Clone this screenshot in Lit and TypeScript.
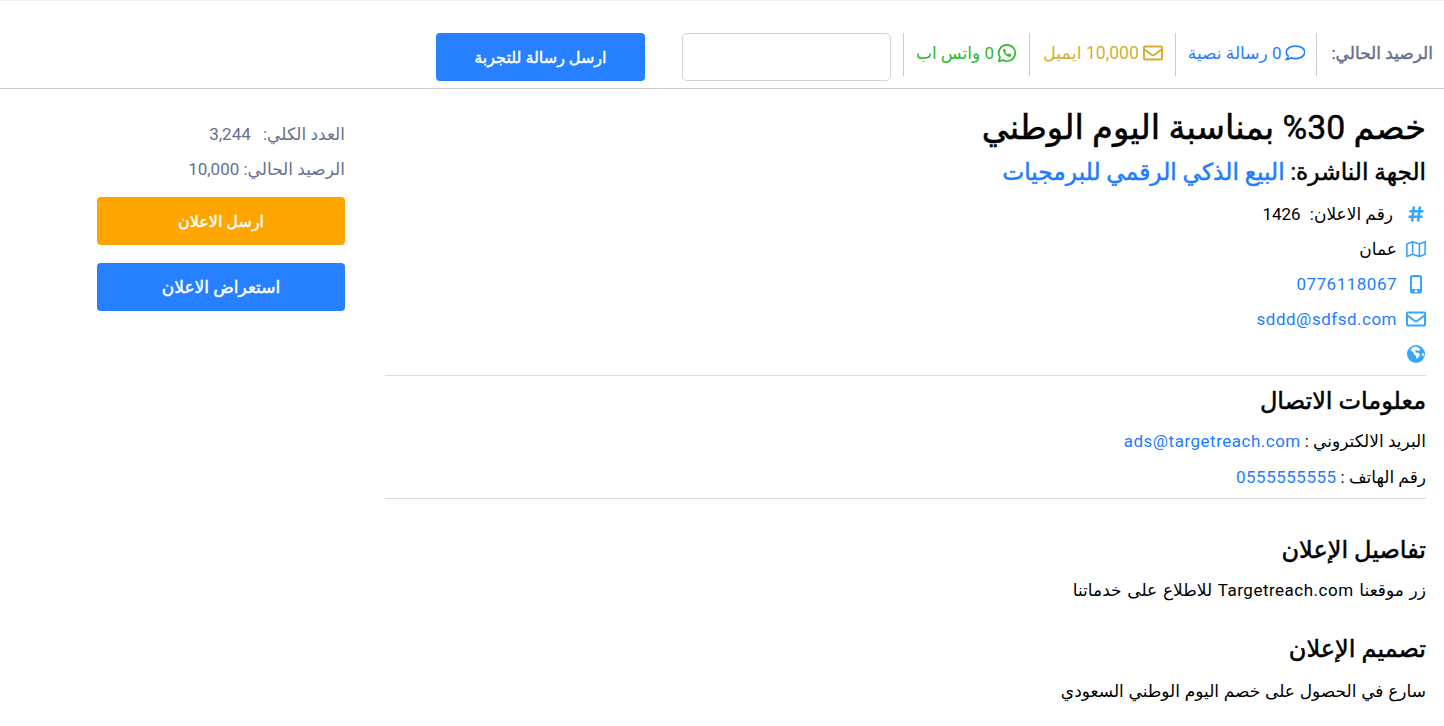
import { LitElement, html, css, svg } from "lit";
import { customElement } from "lit/decorators.js";

const chat = svg`<path d="M10.500 3C5.300 3 1.200 5.700 1.200 9.200c0 1.500.8 3 2.100 4-.2 1.200-.9 2.300-1.900 3.200 1.700-.1 3.300-.7 4.500-1.600 1.400.5 3 .8 4.600.8 5.200 0 9.300-2.800 9.300-6.400S15.700 3 10.500 3z" fill="none" stroke="currentColor" stroke-width="1.600"/>`;
const mail = svg`<rect x="1" y="3.500" width="18" height="13" rx="1" fill="none" stroke="currentColor" stroke-width="2"/><path d="M1.500 6.500l7 5.200c.9.700 2.100.7 3 0l7-5.200" fill="none" stroke="currentColor" stroke-width="2"/>`;
const wa = svg`<path d="M10 1.800a8.200 8.200 0 00-7 12.500L1.900 18.200l4-1.100A8.200 8.200 0 1010 1.800z" fill="none" stroke="currentColor" stroke-width="1.700" stroke-linejoin="round"/><path d="M7 5.800c-1 .8-1.200 2-.4 3.500.9 1.900 2.400 3.300 4.300 4.100 1.500.6 2.800.2 3.300-1 .2-.5.100-.8-.2-1l-1.600-.8c-.3-.1-.5 0-.7.200l-.6.800c-1.300-.5-2.300-1.400-3-2.700l.5-.6c.2-.3.200-.5.100-.7l-.7-1.600c-.2-.4-.5-.4-1-.2z" fill="currentColor"/>`;
const hash = svg`<path d="M8 2.500L6 17.500M14 2.500L12 17.500M3.500 7.300h14M2.500 12.700h14" fill="none" stroke="currentColor" stroke-width="2.600"/>`;
const map = svg`<path d="M.9 5l5.700-2.300 6.800 2.300 5.700-2.300v12.500l-5.700 2.300-6.800-2.300-5.700 2.300zM6.600 2.700v12.500M13.400 5v12.500" fill="none" stroke="currentColor" stroke-width="1.600" stroke-linejoin="round"/>`;
const phone = svg`<path fill-rule="evenodd" d="M6 1h8c1.100 0 2 .9 2 2v14.500c0 1.100-.9 2-2 2H6c-1.100 0-2-.9-2-2V3c0-1.100.9-2 2-2zm0 2.200V15h8V3.200zM10 15.800a1.400 1.400 0 100 2.800 1.400 1.400 0 000-2.800z" fill="currentColor"/>`;
const globe = svg`<circle cx="10" cy="10" r="9" fill="currentColor"/><path d="M10 2.500l3 1.500 1.500 2-2.500 1-1-1-2 .5 1 2 3 .5 1 2-2 3-1.500 1-.5-3-2-1.500-.5-2-3-2.500 2-2.500zM16 9l2 .5-.5 3-1.500-1z" fill="#fff"/>`;

const icon = (p: unknown) => html`<svg class="ic" viewBox="0 0 20 20">${p}</svg>`;
const L = (s: string) => html`<span class="lat">${s}</span>`;

@customElement("app-root")
export class AppRoot extends LitElement {
  static styles = css`
    :host { display: block; height: 726px; overflow: hidden; background: #fff; color: #000;
      font-family: "Roboto", "DejaVu Sans", sans-serif; font-size: 17px; direction: rtl; }
    .ic { width: 20px; height: 20px; flex: none; display: block; }
    a { color: #1f7cff; }
    .lat { letter-spacing: .5px; }
    .semi { -webkit-text-stroke: .45px currentColor; }
    .top { height: 89px; box-sizing: border-box; border-top: 1px solid #f0f0f0; border-bottom: 1px solid #ccc;
      display: flex; align-items: flex-start; padding: 32px 11px 0 0; }
    .stat { height: 43px; display: flex; align-items: center; gap: 4px; padding: 0 12px 4px 12px; box-sizing: border-box; border-left: 1px solid #ccc; white-space: nowrap; }
    .stat.lbl { padding: 0 0 4px 14px; color: #67708f; }
    .blue { color: #1f7cff; padding-right: 11px; }
    .gold { color: #d4af37; padding-left: 13px; }
    .gold span { font-size: 17.600px; }
    .green { color: #2db82d; gap: 3px; }
    .field { width: 209px; height: 48px; box-sizing: border-box; border: 1px solid #ced4da; border-radius: 5px; margin-right: 12px; background: #fff; flex: none; }
    .btn { width: 209px; height: 48px; border-radius: 4px; color: #fff; font-size: 16px; display: flex; align-items: center; justify-content: center; background: #2780ff; flex: none; -webkit-text-stroke: .45px currentColor; }
    .send { margin-right: 37px; }
    .body { display: flex; padding: 18px 18px 0 0; gap: 40px; }
    .main { width: 1041px; flex: none; }
    h1 { margin: 0; font-size: 33.700px; line-height: 42px; font-weight: 400; -webkit-text-stroke: .5px currentColor; }
    h2 { margin: 0; font-size: 24px; line-height: 30px; font-weight: 400; -webkit-text-stroke: .5px currentColor; }
    .pub { margin: 0; font-size: 23.300px; line-height: 47px; -webkit-text-stroke: .5px currentColor; }
    .row { display: flex; align-items: center; height: 35px; gap: 9px; }
    .row .ic { color: #37a6ff; }
    .gap4 { margin-right: 4px; }
    .num { margin-right: 5px; }
    hr { border: 0; border-top: 1px solid #ddd; margin: 0; }
    .rule1 { margin-top: 4px; }
    .rule2 { margin-top: 3px; }
    .line { height: 36px; display: flex; align-items: center; gap: 4px; }
    .h-contact { margin-top: 10px; margin-bottom: 7px; }
    .h-details { margin-top: 36px; }
    .h-design { margin-top: 26px; }
    .t-details { margin-top: 7px; word-spacing: 1.500px; }
    .t-design { margin-top: 9px; word-spacing: .5px; }
    .side { width: 248px; flex: none; color: #67708f; padding-top: 9px; }
    .side .t { height: 35px; display: flex; align-items: center; }
    .n1 { margin-right: 8px; }
    .side .btn { width: 248px; margin-top: 18px; }
    .side .orange { background: #ffa500; margin-top: 11px; }
    .side .wide { font-size: 17px; }
  `;
  render() {
    return html`
      <div class="top">
        <div class="stat lbl semi">الرصيد الحالي:</div>
        <div class="stat blue">${icon(chat)}<span>${L("0")} رسالة نصية</span></div>
        <div class="stat gold">${icon(mail)}<span>${L("10,000")} ايميل</span></div>
        <div class="stat green">${icon(wa)}<span>${L("0")} واتس اب</span></div>
        <div class="field"></div>
        <div class="btn send">ارسل رسالة للتجربة</div>
      </div>
      <div class="body">
        <div class="main">
          <h1>خصم ${L("30%")} بمناسبة اليوم الوطني</h1>
          <div class="pub">الجهة الناشرة: <a>البيع الذكي الرقمي للبرمجيات</a></div>
          <div class="row">${icon(hash)}<span class="gap4">رقم الاعلان: <span class="lat num">1426</span></span></div>
          <div class="row">${icon(map)}<span>عمان</span></div>
          <div class="row">${icon(phone)}<a class="lat">0776118067</a></div>
          <div class="row">${icon(mail)}<a class="lat">sddd@sdfsd.com</a></div>
          <div class="row">${icon(globe)}</div>
          <hr class="rule1" />
          <h2 class="h-contact">معلومات الاتصال</h2>
          <div class="line">البريد الالكتروني : <a class="lat">ads@targetreach.com</a></div>
          <div class="line">رقم الهاتف : <a class="lat">0555555555</a></div>
          <hr class="rule2" />
          <h2 class="h-details">تفاصيل الإعلان</h2>
          <div class="line t-details"><span>زر موقعنا ${L("Targetreach.com")} للاطلاع على خدماتنا</span></div>
          <h2 class="h-design">تصميم الإعلان</h2>
          <div class="line t-design">سارع في الحصول على خصم اليوم الوطني السعودي</div>
        </div>
        <div class="side">
          <div class="t"><span>العدد الكلي: <span class="lat n1">3,244</span></span></div>
          <div class="t"><span>الرصيد الحالي: ${L("10,000")}</span></div>
          <div class="btn orange">ارسل الاعلان</div>
          <div class="btn wide">استعراض الاعلان</div>
        </div>
      </div>`;
  }
}
